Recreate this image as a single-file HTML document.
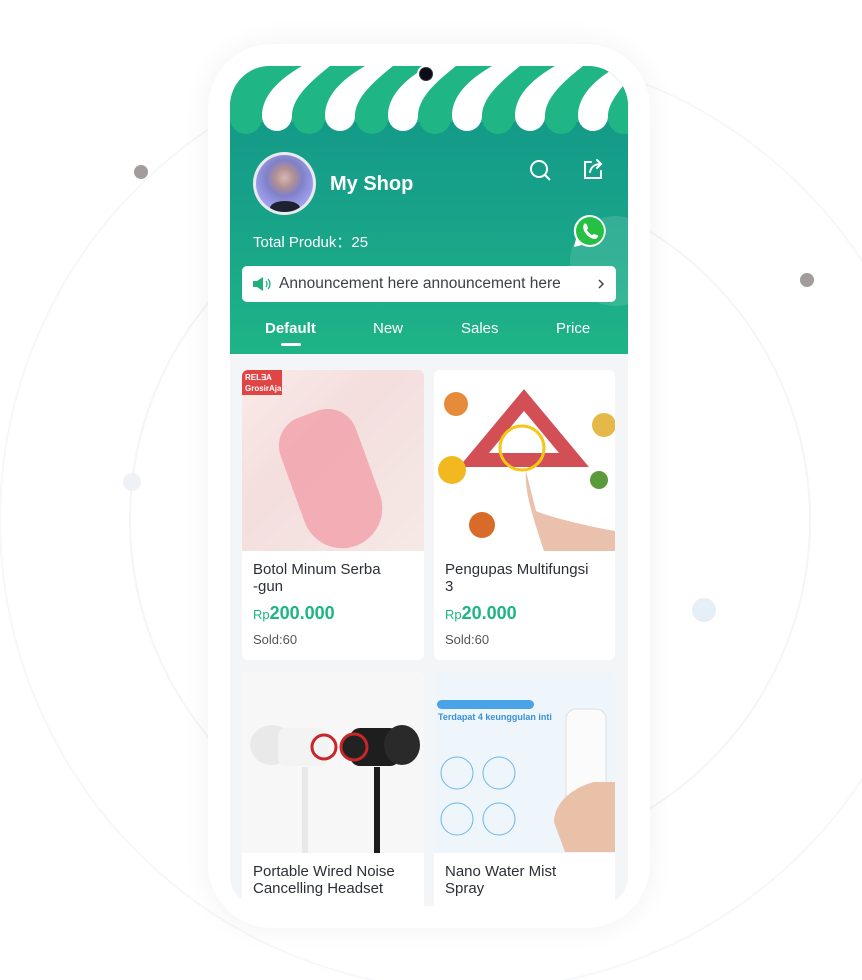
<!DOCTYPE html>
<html><head><meta charset="utf-8"><style>
*{margin:0;padding:0;box-sizing:border-box}
body{width:862px;height:980px;background:#fff;position:relative;overflow:hidden;font-family:"Liberation Sans",sans-serif}
.abs{position:absolute}
.phone{left:208px;top:44px;width:442px;height:884px;border-radius:64px;background:#fff;box-shadow:0 0 30px rgba(0,0,0,0.06)}
.screen{left:230px;top:66px;width:398px;height:840px;border-radius:40px 40px 30px 30px;overflow:hidden;background:#f3f5f7}
.hdr{left:0;top:0;width:398px;height:288px;background:linear-gradient(180deg,#129688 0%,#17a289 50%,#1fb487 100%)}
.card{background:#fff;border-radius:6px;overflow:hidden}
.t{color:#2b2f36;font-size:15px;line-height:17px}
.p{color:#1db584;font-weight:bold;font-size:18px}
.p small{font-size:13px;font-weight:normal}
.s{color:#555;font-size:13px}
.tab{color:#fff;font-size:15px;top:254px}
</style></head><body>
<svg class="abs" style="left:0;top:0" width="862" height="980">
<circle cx="470" cy="520" r="470" fill="none" stroke="#f6f7fa" stroke-width="2"/>
<circle cx="470" cy="520" r="340" fill="none" stroke="#f4f5f9" stroke-width="2"/>
<circle cx="141" cy="172" r="7" fill="#a39c9c"/>
<circle cx="807" cy="280" r="7" fill="#a39c9c"/>
<circle cx="132" cy="482" r="9" fill="#eef2f7"/>
<circle cx="704" cy="610" r="12" fill="#e6eef7"/>
</svg>
<div class="abs phone"></div>
<div class="abs screen">
 <div class="abs hdr"></div>
 <svg class="abs" style="left:0;top:0" width="398" height="80">
  <rect x="0" y="0" width="398" height="56" fill="#20b585"/>
  <g fill="#20b585">
   <circle cx="16" cy="52" r="16"/><circle cx="79" cy="52" r="16"/><circle cx="142" cy="52" r="16"/><circle cx="205" cy="52" r="16"/><circle cx="268" cy="52" r="16"/><circle cx="331" cy="52" r="16"/><circle cx="394" cy="52" r="16"/>
  </g>
  <g fill="#fff">
   <path d="M32,50 C32,30 48,14 72,0 L100,0 C80,16 62,32 62,50 A15,15 0 0 1 32,50Z"/>
   <path d="M95,50 C95,30 111,14 135,0 L163,0 C143,16 125,32 125,50 A15,15 0 0 1 95,50Z"/>
   <path d="M158,50 C158,30 174,14 198,0 L226,0 C206,16 188,32 188,50 A15,15 0 0 1 158,50Z"/>
   <path d="M222,50 C222,30 238,14 262,0 L290,0 C270,16 252,32 252,50 A15,15 0 0 1 222,50Z"/>
   <path d="M285,50 C285,30 301,14 325,0 L353,0 C333,16 315,32 315,50 A15,15 0 0 1 285,50Z"/>
   <path d="M348,50 C348,30 364,14 388,0 L398,0 L398,14 C388,26 378,38 378,50 A15,15 0 0 1 348,50Z"/>
  </g>
  <circle cx="196" cy="8" r="9" fill="#fff"/>
  <circle cx="196" cy="8" r="6.5" fill="#0b0b1a" stroke="#333" stroke-width="1"/>
 </svg>
 <div class="abs" style="left:340px;top:150px;width:90px;height:90px;border-radius:50%;background:rgba(255,255,255,0.12)"></div>
 <div class="abs" style="left:23px;top:86px;width:63px;height:63px;border-radius:50%;background:#eaeaea;padding:3px">
  <div style="width:57px;height:57px;border-radius:50%;background:radial-gradient(circle at 50% 40%,#d5b8ae 0,#b08f94 22%,#8080c8 40%,#9ea0ee 70%);position:relative;overflow:hidden">
   <div style="position:absolute;left:14px;top:46px;width:30px;height:14px;border-radius:50%;background:#1d2230"></div>
  </div>
 </div>
 <div class="abs" style="left:100px;top:107px;color:#fff;font-size:20px;font-weight:bold">My Shop</div>
 <svg class="abs" style="left:299px;top:93px" width="24" height="24" viewBox="0 0 24 24" fill="none" stroke="#fff" stroke-width="2"><circle cx="10" cy="10" r="8"/><path d="M16 16l5 5"/></svg>
 <svg class="abs" style="left:351px;top:92px" width="24" height="24" viewBox="0 0 24 24" fill="none" stroke="#fff" stroke-width="2" stroke-linecap="round"><path d="M10 4H4v16h16v-7"/><path d="M9 14c1-5 5-8 11-8M16 2l4 4-4 4"/></svg>
 <svg class="abs" style="left:342px;top:147px" width="36" height="36" viewBox="0 0 36 36"><path d="M18 2a16 16 0 0 0-14 24l-2 8 8-2A16 16 0 1 0 18 2z" fill="#fff"/><circle cx="18" cy="18" r="14" fill="#26c044"/><path d="M12 11c1-1 2-1 3 1l1 3c0 1-1 1-1 2 1 2 3 4 5 5 1 0 1-1 2-1l3 1c2 1 1 2 0 3-2 2-5 1-9-2-4-4-6-8-4-12z" fill="#fff"/></svg>
 <div class="abs" style="left:23px;top:165px;color:#fff;font-size:15px">Total Produk：25</div>
 <div class="abs" style="left:12px;top:200px;width:374px;height:36px;background:#fff;border-radius:5px"></div>
 <svg class="abs" style="left:22px;top:210px" width="20" height="16" viewBox="0 0 20 16"><path d="M1 5h4l6-4v14l-6-4H1z" fill="#22b07a"/><path d="M14 5q2 3 0 6M16 3q4 5 0 10" stroke="#22b07a" stroke-width="1.3" fill="none"/></svg>
 <div class="abs" style="left:49px;top:209px;color:#3c4048;font-size:15.5px">Announcement here announcement here</div>
 <svg class="abs" style="left:366px;top:212px" width="10" height="12"><path d="M3 2l4 4-4 4" stroke="#444" stroke-width="1.5" fill="none"/></svg>
 <div class="abs tab" style="left:35px;font-weight:bold">Default</div>
 <div class="abs" style="left:51px;top:277px;width:20px;height:3px;background:#fff;border-radius:2px"></div>
 <div class="abs tab" style="left:143px">New</div>
 <div class="abs tab" style="left:231px">Sales</div>
 <div class="abs tab" style="left:326px">Price</div>

 <div class="abs card" style="left:12px;top:304px;width:182px;height:290px">
  <div style="height:181px;background:linear-gradient(135deg,#f9ebe9,#f4dede 40%,#f5e9e6);position:relative">
   <div style="position:absolute;left:0;top:0;width:40px;height:25px;background:#e04545;color:#fff;font-size:8px;font-weight:bold;padding:2px 3px;line-height:11px;overflow:hidden">REL∃A<br>GrosirAja</div>
   <div style="position:absolute;left:50px;top:40px;width:80px;height:140px;border-radius:30px 30px 40px 40px;background:#f1a3ad;transform:rotate(-20deg);opacity:.85"></div>
  </div>
  <div class="abs t" style="left:11px;top:191px">Botol Minum Serba<br>-gun</div>
  <div class="abs p" style="left:11px;top:233px"><small>Rp</small>200.000</div>
  <div class="abs s" style="left:11px;top:262px">Sold:60</div>
 </div>
 <div class="abs card" style="left:204px;top:304px;width:181px;height:290px">
  <div style="height:181px;background:#fff;position:relative">
   <svg width="181" height="181"><path d="M40 90L90 30l50 60z" fill="none" stroke="#d24f55" stroke-width="14"/><circle cx="88" cy="78" r="22" fill="none" stroke="#f5c518" stroke-width="3"/><path d="M110 181c-10-30-20-60-18-80l10 40c10 5 50 15 79 20v20z" fill="#e9c1ac"/><circle cx="22" cy="34" r="12" fill="#e58b3a"/><circle cx="170" cy="55" r="12" fill="#e5b84a"/><circle cx="18" cy="100" r="14" fill="#f2b820"/><circle cx="48" cy="155" r="13" fill="#d96a2a"/><circle cx="165" cy="110" r="9" fill="#5a9a3a"/></svg>
  </div>
  <div class="abs t" style="left:11px;top:191px">Pengupas Multifungsi<br>3</div>
  <div class="abs p" style="left:11px;top:233px"><small>Rp</small>20.000</div>
  <div class="abs s" style="left:11px;top:262px">Sold:60</div>
 </div>
 <div class="abs card" style="left:12px;top:606px;width:182px;height:250px">
  <div style="height:181px;background:#f7f7f7;position:relative">
   <svg width="182" height="181"><rect x="60" y="95" width="6" height="86" fill="#e8e8e8"/><rect x="132" y="95" width="6" height="86" fill="#1c1c1c"/><ellipse cx="30" cy="73" rx="22" ry="20" fill="#e9e9e9"/><rect x="36" y="56" width="50" height="38" rx="8" fill="#f3f3f3"/><circle cx="82" cy="75" r="12" fill="none" stroke="#c8262b" stroke-width="3"/><rect x="108" y="56" width="50" height="38" rx="10" fill="#1e1e1e"/><circle cx="112" cy="75" r="13" fill="#222" stroke="#c8262b" stroke-width="3"/><ellipse cx="160" cy="73" rx="18" ry="20" fill="#2a2a2a"/></svg>
  </div>
  <div class="abs t" style="left:11px;top:191px">Portable Wired Noise<br>Cancelling Headset</div>
 </div>
 <div class="abs card" style="left:204px;top:606px;width:181px;height:250px">
  <div style="height:181px;background:#eef6fb;position:relative">
   <div style="position:absolute;left:3px;top:28px;width:97px;height:9px;border-radius:5px;background:#4aa3e8"></div>
   <div style="position:absolute;left:4px;top:40px;color:#3a8fd8;font-size:9px;font-weight:bold">Terdapat 4 keunggulan inti</div>
   <svg width="181" height="181" style="position:absolute;left:0;top:0"><g fill="none" stroke="#6cb6ec"><circle cx="23" cy="101" r="16"/><circle cx="65" cy="101" r="16"/><circle cx="23" cy="147" r="16"/><circle cx="65" cy="147" r="16"/></g><rect x="132" y="37" width="40" height="125" rx="10" fill="#fbfbfb" stroke="#ddd"/><path d="M120 150c0-20 20-35 40-40l21 0v70h-50z" fill="#e9c1a8"/></svg>
  </div>
  <div class="abs t" style="left:11px;top:191px">Nano Water Mist<br>Spray</div>
 </div>
</div>
</body></html>
